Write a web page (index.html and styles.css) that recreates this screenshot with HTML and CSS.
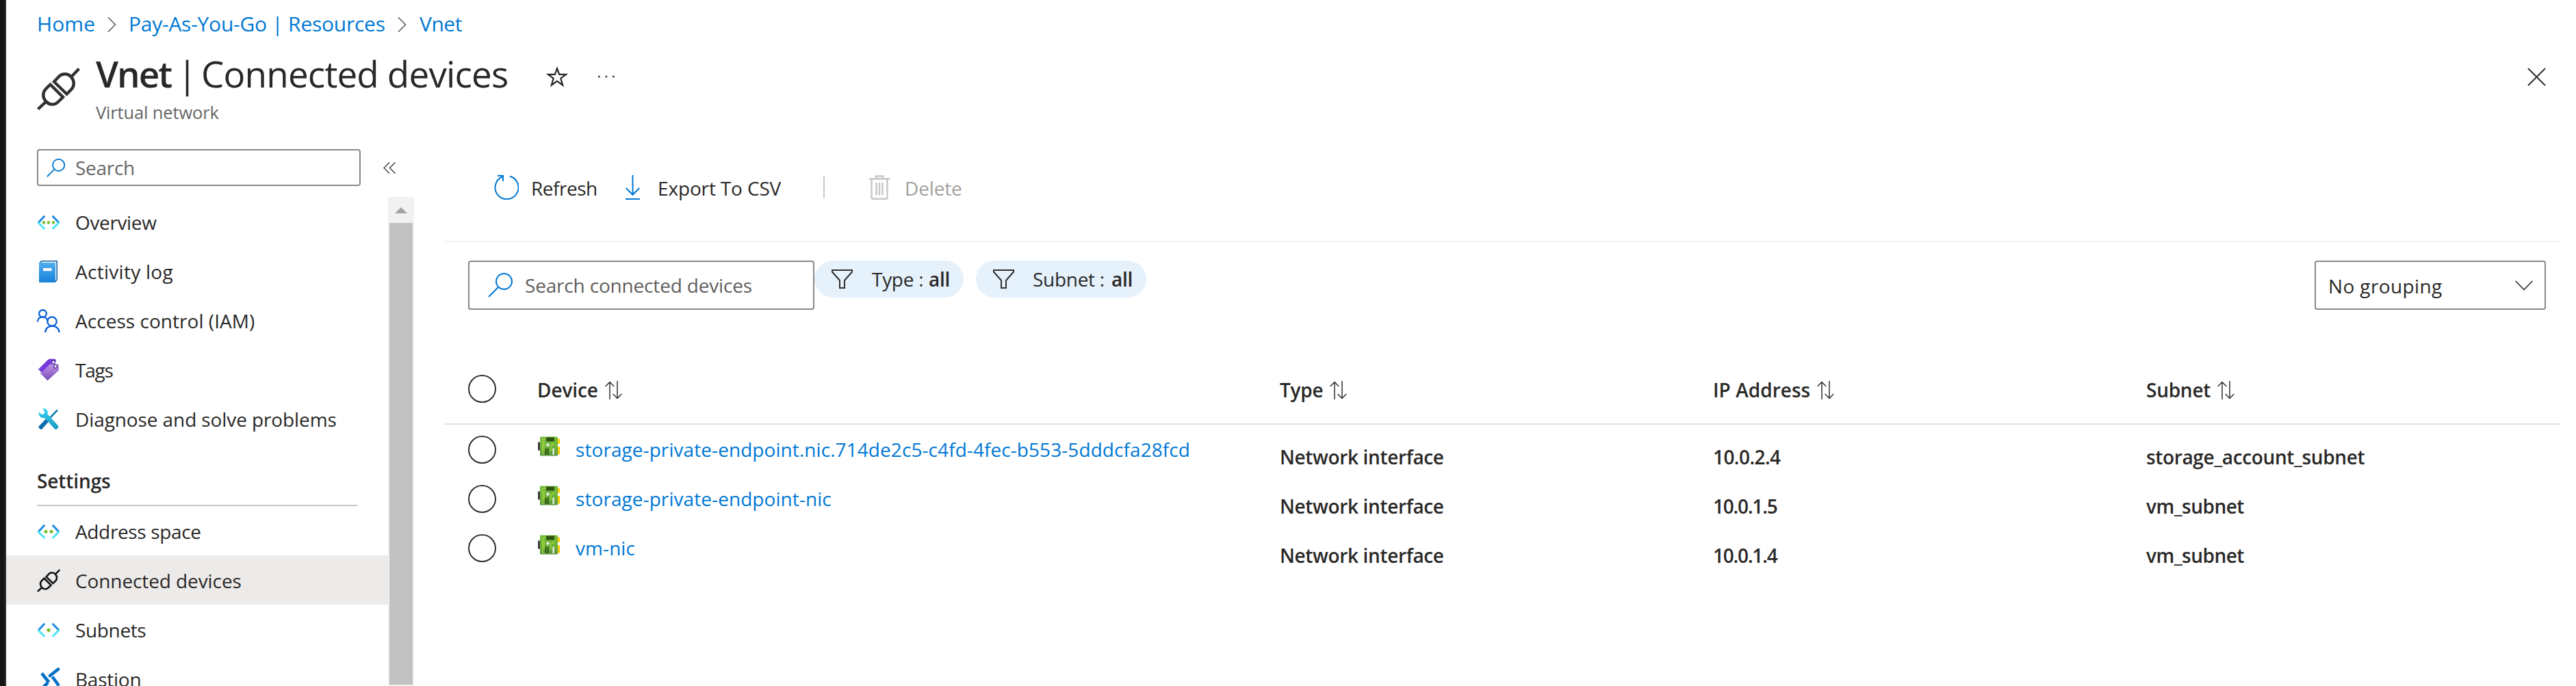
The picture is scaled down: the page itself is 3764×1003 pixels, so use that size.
FILE: index.html
```html
<!DOCTYPE html>
<html lang="en">
<head>
<meta charset="utf-8">
<title>Vnet | Connected devices</title>
<link rel="stylesheet" href="styles.css">
</head>
<body>
<svg class="defs" width="0" height="0">
  <defs>
    <linearGradient id="book" x1="0" y1="0" x2="0" y2="1"><stop offset="0" stop-color="#50adf0"/><stop offset="1" stop-color="#1683d9"/></linearGradient>
    <linearGradient id="tag" x1="0" y1="0" x2="0" y2="1"><stop offset="0" stop-color="#c095e8"/><stop offset="1" stop-color="#7a4bb8"/></linearGradient>
    <linearGradient id="wrench" x1="0" y1="0" x2="0" y2="1"><stop offset="0" stop-color="#32d4f5"/><stop offset="1" stop-color="#1d96bd"/></linearGradient>
    <linearGradient id="board" x1="0" y1="0" x2="0" y2="1"><stop offset="0" stop-color="#76bc3f"/><stop offset=".6" stop-color="#6db03c"/><stop offset="1" stop-color="#5b9440"/></linearGradient>
    <symbol id="plug" viewBox="0 0 63 62"><g fill="none" stroke="currentColor" stroke-linejoin="miter"><path d="M1.5 60.5 14 49M61.5 1.500 50 13.500M19.500 24.500 38 43 31 50C26 55 18 55 13 49 8 44 8 36 13 31ZM25 20.500 43.500 38.500 50 32C55 27 55 19 50 13.500 45 8 37 8 32 13Z"/></g></symbol>
    <symbol id="brackets" viewBox="0 0 34 34"><g fill="none" stroke-width="3" stroke-linecap="round"><path stroke="#1b8ae0" d="M10.500 8.500 2.500 17M23.500 8.500 31.500 17"/><path stroke="#4de3f7" d="M2.500 18 10.500 26M31.500 18 23.500 26"/></g></symbol>
    <symbol id="search" viewBox="0 0 36 36"><g fill="none" stroke="#0078d4"><circle cx="23.500" cy="12.500" r="11.500"/><path d="M15.300 20.700 1 35"/></g></symbol>
    <symbol id="sort" viewBox="0 0 25 27"><path fill="none" stroke="#323130" stroke-width="1.500" d="M7 27V1.500M.700 8 7 1.500 13.300 8M18 0V25.500M11.700 19 18 25.500 24.300 19"/></symbol>
    <symbol id="funnel" viewBox="0 0 31 28"><path fill="none" stroke="#323130" stroke-width="2" d="M1 1H30V3.500L19 16V27H12V16L1 3.500Z"/></symbol>
    <symbol id="nic" viewBox="0 0 32 29"><path fill="#3c3c41" d="M0 8.500h4v12H0z"/><path fill="#fc0" d="M28 3.500h4v7.500h-4zM28 15h4v11.500h-4z"/><rect x="3" y=".500" width="26" height="28" rx="1" fill="url(#board)"/><path fill="none" stroke="#a4dc33" stroke-width="1.200" d="M11.500 4.500H7V26H9.500M9 8V21M22.500 8.500V12.500H19V20L17.500 22"/><path fill="#2f5610" d="M12 1.500h12v6H12zM10.500 17.500h2v9.500h-2zM13.700 17.500h2v9.500h-2z"/><circle cx="14.500" cy="12.500" r="2.200" fill="#e6ece6"/><path fill="#f1f4ee" d="M21.500 17.500h2.300v9.500h-2.300z"/></symbol>
  </defs>
</svg>

<div class="edge"></div>
<div class="page">
  <nav class="crumbs">
    <a class="crumb-home">Home</a>
    <svg class="crumb-sep" width="13" height="22" viewBox="0 0 13 22"><path d="M1 .5 11.500 11 1 21.500"/></svg>
    <a class="crumb-sub">Pay-As-You-Go | Resources</a>
    <svg class="crumb-sep" width="13" height="22" viewBox="0 0 13 22"><path d="M1 .5 11.500 11 1 21.500"/></svg>
    <a class="crumb-vnet">Vnet</a>
  </nav>

  <header class="head">
    <svg class="head-icon" width="63" height="62"><use href="#plug"/></svg>
    <div class="head-titles">
      <h1 class="title"><span class="title-name">Vnet</span><span class="title-bar">|</span><span class="title-page">Connected devices</span></h1>
      <div class="subtitle">Virtual network</div>
    </div>
    <svg class="star" width="32" height="31" viewBox="0 0 32 31"><path fill="none" stroke="#292827" stroke-width="2.200" d="M16 3 19.200 11.800H29L21.300 17.600 24.200 27.500 16 21.700 7.800 27.500 10.700 17.600 3 11.800H12.800Z"/></svg>
    <svg class="dots" width="26" height="4" viewBox="0 0 26 4"><path fill="#323130" d="M1 .700h2.600v2.600H1zM11.500.700h2.600v2.600h-2.600zM22 .700h2.600v2.600H22z"/></svg>
    <svg class="close" width="27" height="27" viewBox="0 0 27 27"><path fill="none" stroke="#323130" stroke-width="2" d="M1 1 26 26M26 1 1 26"/></svg>
  </header>

  <div class="body">
    <aside class="side">
      <div class="side-top">
        <div class="side-search"><svg width="27" height="27"><use href="#search"/></svg><span class="sp-search">Search</span></div>
        <svg class="collapse" width="19" height="17" viewBox="0 0 19 17"><path fill="none" stroke="#484644" stroke-width="1.500" d="M9 .500 1 8.500 9 16.500M17.500.500 9.500 8.500 17.500 16.500"/></svg>
      </div>
      <div class="side-scroll">
        <nav class="menu">
          <a class="item"><svg width="34" height="34"><use href="#brackets"/><g fill="#76bc2d"><circle cx="10" cy="17.300" r="2.200"/><circle cx="17" cy="17.300" r="2.200"/><circle cx="24" cy="17.300" r="2.200"/></g></svg><span class="sp-4">Overview</span></a>
          <a class="item"><svg width="34" height="34"><path fill="#fff" stroke="#0a5a9c" stroke-width="1.500" d="M4 4.500 7 1.700H29.200V29L26 32.500"/><rect x="3" y="4" width="24" height="29" rx="1" fill="url(#book)"/><path fill="#fff" d="M9 12h12.500v4.200H9z"/></svg><span class="sp-act">Activity log</span></a>
          <a class="item"><svg width="34" height="34"><g fill="none" stroke="#015cda" stroke-width="2.200"><circle cx="8.500" cy="6.500" r="5.400"/><path d="M1 18.500C1 9 14.500 9 16 18"/><circle cx="22" cy="18" r="6.700"/><path d="M12 34C13 21.500 31.500 21.500 32.700 34"/></g></svg><span class="sp-0">Access control (IAM)</span></a>
          <a class="item"><svg width="34" height="34"><path fill="#773adc" d="M2 16 16 2Q17.500 .800 19 .800H25Q28 1 28 4L8 22Z"/><path fill="url(#tag)" d="M5 22 19.500 8.200H30Q32 9 32 11V17.500L15.500 32.500Z"/><g fill="#fff" stroke="#552f99" stroke-width="1.400"><circle cx="24" cy="5.500" r="2.400"/><circle cx="27" cy="11.800" r="2.400"/></g></svg><span class="sp-tags">Tags</span></a>
          <a class="item"><svg width="34" height="34"><path fill="#0b6cab" d="M2.500 27.500 13 16.500 17 20.500 7.500 31.200Q6 32.500 4.500 31.200L2.500 29Q2 28 2.500 27.500Z"/><path stroke="#1583b5" stroke-width="2.600" d="M15 19 30 3.500"/><path fill="url(#wrench)" d="M8 2C11-.500 17 3 15.500 9.500L31 26.500Q32 28.500 30 30.700 28 32.500 26 31.200L11 15C6 16.500 1.500 11.500 3 6.500L6.500 10 10.500 9 11.500 5.500Z"/></svg><span class="sp-1">Diagnose and solve problems</span></a>
          <div class="group sp-1">Settings</div>
          <a class="item"><svg width="34" height="34"><use href="#brackets"/><g fill="#76bc2d"><circle cx="13" cy="17.300" r="2.500"/><circle cx="21" cy="17.300" r="2.500"/></g></svg><span class="sp-4">Address space</span></a>
          <a class="item item-on"><svg class="plug-small" width="34" height="34"><use href="#plug"/></svg><span class="sp-1">Connected devices</span></a>
          <a class="item"><svg width="34" height="34"><use href="#brackets"/><circle cx="17" cy="17.300" r="2.600" fill="#76bc2d"/></svg><span class="sp-4">Subnets</span></a>
          <a class="item"><svg width="34" height="34"><path fill="none" stroke="#0072c6" stroke-width="4.600" stroke-linecap="round" d="M31 2.500 19 12"/><path fill="none" stroke="#0072c6" stroke-width="4.600" d="M7 8.500 17.500 21.500M22.500 13.500 32 26.500M16 22 5 33"/></svg><span class="sp-3">Bastion</span></a>
        </nav>
        <div class="bar"><svg class="bar-up" width="18" height="9" viewBox="0 0 18 9"><path fill="#a3a3a3" d="M0 9 9 0 18 9z"/></svg><div class="thumb"></div></div>
      </div>
    </aside>

    <main class="main">
      <div class="tools">
        <svg class="ic-refresh" width="36" height="36" viewBox="0 0 36 36"><path fill="none" stroke="#0078d4" stroke-width="2" d="M12.500 2.300A17 17 0 1 0 23 1.800M5 1H13V9"/></svg>
        <span class="tool-refresh">Refresh</span>
        <svg class="ic-export" width="21" height="36" viewBox="0 0 21 36"><path fill="none" stroke="#0078d4" stroke-width="2" d="M10.500 0V29M.700 19 10.500 28.800 20.300 19M0 35H21"/></svg>
        <span class="tool-export">Export To CSV</span>
        <i class="tool-sep"></i>
        <svg class="ic-trash" width="30" height="36" viewBox="0 0 30 36"><path fill="none" stroke="#c8c6c4" stroke-width="2.400" d="M0 5.500H30M10 5V1.500H20V5M3.500 6V32.500Q3.500 34.800 6 34.800H24Q26.500 34.800 26.500 32.500V6M10.500 11V29.500M15 11V29.500M19.500 11V29.500"/></svg>
        <span class="tool-delete">Delete</span>
      </div>

      <div class="filters">
        <div class="find"><svg width="36" height="36"><use href="#search"/></svg><span>Search connected devices</span></div>
        <div class="pill pill-type"><svg width="31" height="28"><use href="#funnel"/></svg><span class="key">Type :</span><b>all</b></div>
        <div class="pill pill-subnet"><svg width="31" height="28"><use href="#funnel"/></svg><span class="key">Subnet :</span><b>all</b></div>
        <div class="select"><span>No grouping</span><svg width="26" height="15" viewBox="0 0 26 15"><path fill="none" stroke="#323130" stroke-width="1.600" d="M.600.800 13 13.500 25.400.800"/></svg></div>
      </div>

      <div class="table">
        <div class="row row-head">
          <i class="radio"></i>
          <div class="th sp-1">Device<svg width="25" height="27"><use href="#sort"/></svg></div>
          <div class="th sp-3">Type<svg width="25" height="27"><use href="#sort"/></svg></div>
          <div class="th sp-0">IP Address<svg width="25" height="27"><use href="#sort"/></svg></div>
          <div class="th sp-3">Subnet<svg width="25" height="27"><use href="#sort"/></svg></div>
        </div>
        <div class="row">
          <i class="radio"></i>
          <div class="device"><svg width="32" height="29"><use href="#nic"/></svg><a>storage-private-endpoint.nic.714de2c5-c4fd-4fec-b553-5dddcfa28fcd</a></div>
          <div class="td sp-4">Network interface</div>
          <div class="td sp-6">10.0.2.4</div>
          <div class="td sp-4">storage_account_subnet</div>
        </div>
        <div class="row">
          <i class="radio"></i>
          <div class="device"><svg width="32" height="29"><use href="#nic"/></svg><a>storage-private-endpoint-nic</a></div>
          <div class="td sp-4">Network interface</div>
          <div class="td sp-13">10.0.1.5</div>
          <div class="td sp-5">vm_subnet</div>
        </div>
        <div class="row">
          <i class="radio"></i>
          <div class="device"><svg width="32" height="29"><use href="#nic"/></svg><a>vm-nic</a></div>
          <div class="td sp-4">Network interface</div>
          <div class="td sp-13">10.0.1.4</div>
          <div class="td sp-5">vm_subnet</div>
        </div>
      </div>
    </main>
  </div>
</div>
</body>
</html>
```
FILE: styles.css
```css
* { box-sizing: border-box; }

body {
  margin: 0;
  height: 1003px;
  overflow: hidden;
  display: flex;
  background: #fff;
  color: #292827;
  font-family: "Open Sans", "Noto Sans", sans-serif;
  font-size: 28px;
  white-space: nowrap;
}

svg { flex: none; display: block; }
.defs { position: absolute; }

/* letter spacing steps */
.sp-act { letter-spacing: .28px; }
.sp-0 { letter-spacing: .04px; }
.sp-1 { letter-spacing: -.1px; }
.sp-3 { letter-spacing: -.25px; }
.sp-search { letter-spacing: -.3px; }
.sp-4 { letter-spacing: -.36px; }
.sp-5 { letter-spacing: -.5px; }
.sp-6 { letter-spacing: -.58px; }
.sp-13 { letter-spacing: -1.2px; }
.sp-tags { letter-spacing: -1.2px; }

.edge {
  flex: none;
  width: 9px;
  background: #161616;
  border-right: 2px solid #333;
}

.page { flex: 1; display: flex; flex-direction: column; min-width: 0; }

/* breadcrumbs */
.crumbs {
  display: flex;
  align-items: center;
  height: 70px;
  padding-left: 45px;
  font-size: 30px;
  line-height: 70px;
  color: #0078d4;
}
.crumb-home { width: 103px; letter-spacing: .1px; }
.crumb-sub { width: 393px; margin-left: 18px; letter-spacing: -.25px; }
.crumb-vnet { margin-left: 19px; letter-spacing: -.5px; }
.crumb-sep { margin-top: 2px; }
.crumb-sep path { fill: none; stroke: #605e5c; stroke-width: 1.6; }

/* page heading */
.head {
  display: flex;
  align-items: flex-start;
  height: 148px;
  padding: 0 44px 0 45px;
}
.head-icon { margin-top: 29px; color: #323130; stroke-width: 4.4px; }
.head-titles { width: 658px; margin-left: 23px; padding-top: 1px; }
.title {
  display: flex;
  margin: 0;
  font-size: 53px;
  font-weight: 400;
  line-height: 74px;
}
.title-name { width: 119px; font-weight: 600; letter-spacing: -2px; }
.title-bar { width: 35px; }
.title-page { letter-spacing: -.84px; }
.subtitle {
  font-size: 25.5px;
  line-height: 38px;
  letter-spacing: -.15px;
  color: #666;
}
.star { margin-top: 27px; }
.dots { margin: 40px 0 0 43px; }
.close { margin: 29px 0 0 auto; }

.body { flex: 1; display: flex; min-height: 0; }

/* side menu */
.side { flex: none; width: 596px; display: flex; flex-direction: column; min-height: 0; }
.side-top { flex: none; display: flex; align-items: center; height: 54px; padding-left: 45px; }
.side-search {
  display: flex;
  align-items: center;
  width: 473px;
  height: 54px;
  padding-left: 12px;
  gap: 15px;
  border: 2px solid #8a8886;
  border-radius: 4px;
  color: #666;
}
.side-search svg { stroke-width: 2.4px; }
.collapse { margin-left: 33px; }
.side-scroll { flex: 1; display: flex; min-height: 0; margin-top: 16px; overflow: hidden; }
.menu { width: 558px; height: 760px; }
.item {
  display: flex;
  align-items: center;
  gap: 22px;
  height: 72px;
  padding: 2px 0 0 45px;
}
.item-on { background: #edebe9; }
.plug-small { color: #111; stroke-width: 4.8px; }
.group {
  width: 468px;
  height: 92px;
  margin-left: 45px;
  padding-top: 32px;
  line-height: 46px;
  font-weight: 600;
  border-bottom: 2px solid #c8c6c4;
}
.bar {
  display: flex;
  flex-direction: column;
  align-items: center;
  width: 38px;
  height: 715px;
  padding: 15px 2px 2px;
  background: #f1f1f1;
}
.thumb { flex: 1; align-self: stretch; margin-top: 14px; background: #c1c1c1; }

/* main area */
.main { flex: 1; min-width: 0; padding: 0 22px 0 45px; }
.tools {
  display: flex;
  align-items: center;
  height: 136px;
  padding: 0 0 22px 72px;
  border-bottom: 2px solid #f5f5f5;
}
.tools span { padding-top: 1px; }
.tool-refresh { width: 138px; margin-left: 18px; letter-spacing: -.49px; }
.tool-export { width: 242px; margin-left: 26px; letter-spacing: -.15px; }
.tool-sep { width: 2px; height: 32px; background: #c8c6c4; }
.ic-trash { margin-left: 65px; }
.tool-delete { margin-left: 22px; letter-spacing: -.16px; color: #a19f9d; }

.filters {
  display: flex;
  align-items: flex-start;
  height: 99px;
  padding: 27px 22px 0 34px;
}
.find {
  display: flex;
  align-items: center;
  width: 506px;
  height: 72px;
  padding-left: 27px;
  gap: 18px;
  border: 2px solid #8a8886;
  border-radius: 4px;
  color: #605e5c;
  letter-spacing: -.18px;
}
.find svg { stroke-width: 2px; }
.pill {
  display: flex;
  align-items: center;
  height: 54px;
  padding-left: 25px;
  border-radius: 27px;
  background: #e5f1fb;
  letter-spacing: -.29px;
}
.pill b { font-weight: 600; }
.pill-type { width: 218px; }
.pill-subnet { width: 249px; margin-left: 18px; }
.key { margin-left: 28px; width: 83px; }
.pill-subnet .key { margin-left: 27px; width: 115px; }
.pill .key, .pill b { padding-bottom: 1px; }
.select {
  display: flex;
  align-items: center;
  justify-content: space-between;
  width: 338px;
  height: 72px;
  margin-left: auto;
  padding: 0 17px 0 18px;
  border: 2px solid #8a8886;
  border-radius: 4px;
  letter-spacing: .38px;
}
.select span { padding-top: 2px; }

/* device table */
.table { padding-top: 80px; }
.row {
  display: grid;
  grid-template-columns: 101px 1085px 633px 633px 1fr;
  align-items: center;
  height: 72px;
  padding-left: 34px;
}
.row-head { height: 88px; padding-bottom: 15px; border-bottom: 2px solid #e1e1e1; }
.radio {
  width: 41px;
  height: 41px;
  border: 2.5px solid #323130;
  border-radius: 50%;
}
.th { display: flex; align-items: center; gap: 10px; padding-top: 3px; font-weight: 600; }
.td { font-weight: 600; padding-top: 21px; }
.device { display: flex; align-items: center; gap: 23px; padding-left: 1px; }
.device svg { margin-bottom: 10px; }
.device a { color: #0078d4; letter-spacing: .07px; }
```
